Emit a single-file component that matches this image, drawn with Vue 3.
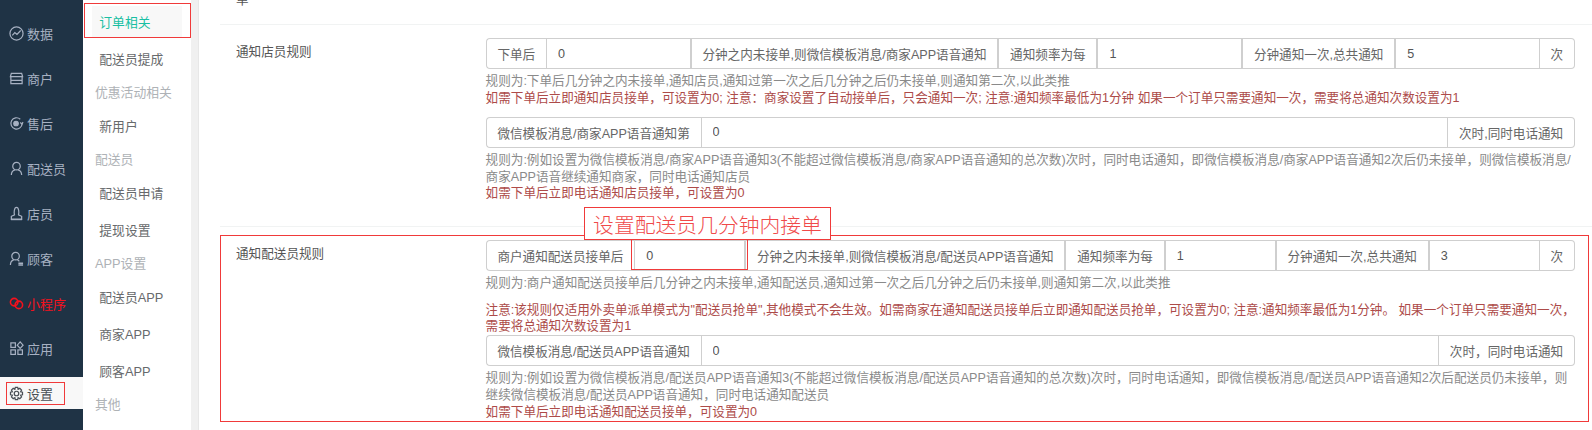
<script setup>
const navItems = [
  { key: 'data', label: '数据' },
  { key: 'store', label: '商户' },
  { key: 'after', label: '售后' },
  { key: 'rider', label: '配送员' },
  { key: 'clerk', label: '店员' },
  { key: 'customer', label: '顾客' },
  { key: 'mini', label: '小程序', hot: true },
  { key: 'apps', label: '应用' },
  { key: 'gear', label: '设置', active: true }
]
const subItems = [
  { label: '订单相关', active: true },
  { label: '配送员提成' },
  { label: '优惠活动相关', head: true },
  { label: '新用户' },
  { label: '配送员', head: true },
  { label: '配送员申请' },
  { label: '提现设置' },
  { label: 'APP设置', head: true },
  { label: '配送员APP' },
  { label: '商家APP' },
  { label: '顾客APP' },
  { label: '其他', head: true }
]
</script>

<template>
  <div class="page">
    <nav class="nav">
      <a v-for="n in navItems" :key="n.key" class="nav-item" :class="{ hot: n.hot, active: n.active }">
        <svg class="ico" viewBox="0 0 16 16" fill="none" stroke="currentColor" stroke-width="1.3">
          <template v-if="n.key === 'data'">
            <circle cx="8" cy="8" r="7" />
            <path d="M3.5 10 6.200 7l2.300 2L12.500 4.800" />
          </template>
          <template v-else-if="n.key === 'store'">
            <path d="M2.500 2.500h11l1 3.500h-13z" />
            <path d="M2 6.500v7h12v-7M2 10h12" />
          </template>
          <template v-else-if="n.key === 'after'">
            <path d="M14 8a6 6 0 1 1-2-4.600" />
            <path d="M15 6.500l-1.200 2-1.800-1.500" />
            <circle cx="7.500" cy="8" r="2.400" fill="currentColor" />
          </template>
          <template v-else-if="n.key === 'rider'">
            <circle cx="8" cy="5.500" r="4" />
            <path d="M2.500 15c0-3 2-5 4-5.500M13.500 15c0-3-2-5-4-5.500" />
          </template>
          <template v-else-if="n.key === 'clerk'">
            <path d="M6 9.500C5 7 5.500 1.500 8 1.500s3 5.500 2 8" />
            <path d="M6 9.500 2.500 11v3h11v-3L10 9.500" />
            <path d="M2 14.500h12" />
          </template>
          <template v-else-if="n.key === 'customer'">
            <circle cx="7" cy="5.500" r="4" />
            <path d="M1.500 15c0-3 2-5 3.500-5.500M9 9.500c.8.300 1.500.8 2 1.500" />
            <path d="M10 13h5M10 15h5" stroke-width="1.500" />
          </template>
          <template v-else-if="n.key === 'mini'">
            <circle cx="5.500" cy="6.500" r="4" stroke-width="1.700" />
            <circle cx="10.500" cy="9.500" r="4" stroke-width="1.700" />
          </template>
          <template v-else-if="n.key === 'apps'">
            <rect x="2" y="2" width="4.800" height="4.800" />
            <rect x="2" y="9.500" width="4.800" height="4.800" />
            <rect x="9.500" y="9.500" width="4.800" height="4.800" />
            <path d="M11.900 1 15 4.400 11.900 7.800 8.800 4.400z" />
          </template>
          <template v-else>
            <circle cx="8" cy="8" r="2.400" />
            <path d="M6.700 1.500h2.600l.4 2 1.800-1 1.900 1.900-1 1.800 2 .4v2.800l-2 .4 1 1.800-1.900 1.900-1.800-1-.4 2H6.700l-.4-2-1.800 1-1.900-1.900 1-1.800-2-.4V6.600l2-.4-1-1.800 1.900-1.900 1.800 1z" />
          </template>
        </svg>
        <span>{{ n.label }}</span>
      </a>
    </nav>

    <aside class="sub">
      <template v-for="s in subItems" :key="s.label">
        <div v-if="s.head" class="sub-head">{{ s.label }}</div>
        <a v-else class="sub-item" :class="{ active: s.active }">{{ s.label }}</a>
      </template>
    </aside>
    <div class="strip"></div>

    <main class="main">
      <div class="cut"><p>单</p></div>

      <section class="row first">
        <label class="row-label">通知店员规则</label>
        <div class="row-body">
          <div class="group">
            <span class="addon">下单后</span>
            <input value="0" />
            <span class="addon">分钟之内未接单,则微信模板消息/商家APP语音通知</span>
            <span class="addon">通知频率为每</span>
            <input value="1" />
            <span class="addon">分钟通知一次,总共通知</span>
            <input value="5" />
            <span class="addon">次</span>
          </div>
          <p class="help">规则为:下单后几分钟之内未接单,通知店员,通知过第一次之后几分钟之后仍未接单,则通知第二次,以此类推</p>
          <p class="help red">如需下单后立即通知店员接单，可设置为0; 注意：商家设置了自动接单后，只会通知一次; 注意:通知频率最低为1分钟 如果一个订单只需要通知一次，需要将总通知次数设置为1</p>
          <div class="group second">
            <span class="addon">微信模板消息/商家APP语音通知第</span>
            <input value="0" />
            <span class="addon">次时,同时电话通知</span>
          </div>
          <p class="help">规则为:例如设置为微信模板消息/商家APP语音通知3(不能超过微信模板消息/商家APP语音通知的总次数)次时，同时电话通知，即微信模板消息/商家APP语音通知2次后仍未接单，则微信模板消息/<br />商家APP语音继续通知商家，同时电话通知店员</p>
          <p class="help red">如需下单后立即电话通知店员接单，可设置为0</p>
        </div>
      </section>

      <section class="row">
        <label class="row-label">通知配送员规则</label>
        <div class="row-body">
          <div class="group">
            <span class="addon">商户通知配送员接单后</span>
            <input value="0" />
            <span class="addon">分钟之内未接单,则微信模板消息/配送员APP语音通知</span>
            <span class="addon">通知频率为每</span>
            <input value="1" />
            <span class="addon">分钟通知一次,总共通知</span>
            <input value="3" />
            <span class="addon">次</span>
          </div>
          <p class="help">规则为:商户通知配送员接单后几分钟之内未接单,通知配送员,通知过第一次之后几分钟之后仍未接单,则通知第二次,以此类推</p>
          <p class="help red spaced">注意:该规则仅适用外卖单派单模式为"配送员抢单",其他模式不会生效。如需商家在通知配送员接单后立即通知配送员抢单，可设置为0; 注意:通知频率最低为1分钟。 如果一个订单只需要通知一次，<br />需要将总通知次数设置为1</p>
          <div class="group tight">
            <span class="addon">微信模板消息/配送员APP语音通知</span>
            <input value="0" />
            <span class="addon">次时，同时电话通知</span>
          </div>
          <p class="help">规则为:例如设置为微信模板消息/配送员APP语音通知3(不能超过微信模板消息/配送员APP语音通知的总次数)次时，同时电话通知，即微信模板消息/配送员APP语音通知2次后配送员仍未接单，则<br />继续微信模板消息/配送员APP语音通知，同时电话通知配送员</p>
          <p class="help red">如需下单后立即电话通知配送员接单，可设置为0</p>
        </div>
      </section>

      <div class="mark rule-box"></div>
      <div class="mark input-box"></div>
      <div class="mark callout">设置配送员几分钟内接单</div>
    </main>
  </div>
</template>

<style>
html, body { margin: 0; overflow: hidden; background: #fff; }
</style>

<style scoped>
.page {
  display: flex;
  width: 1592px;
  height: 430px;
  overflow: hidden;
  font-family: "Liberation Sans", "Noto Sans CJK SC", sans-serif;
  font-size: 12.6px;
  color: #676a6c;
  background: #fff;
}
p { margin: 0; }

.nav {
  flex: 0 0 83px;
  display: flex;
  flex-direction: column;
  gap: 13px;
  padding-top: 17px;
  box-sizing: border-box;
  background: #1f3345;
  color: #a7b1c2;
}
.nav-item {
  position: relative;
  display: flex;
  align-items: center;
  gap: 3px;
  flex: 0 0 32px;
  padding-left: 9px;
  font-size: 13px;
}
.ico { width: 15px; height: 15px; flex: none; }
.nav-item.hot { color: #f5111d; }
.nav-item.active { background: #f8f8f8; color: #4a4f55; }
.nav-item.active::after {
  content: "";
  position: absolute;
  left: 6px;
  top: 5px;
  width: 57px;
  height: 21px;
  border: 1px solid #f03a3a;
}

.sub {
  flex: 0 0 108px;
  display: flex;
  flex-direction: column;
  padding-top: 3px;
  box-sizing: border-box;
  background: #fff;
}
.sub-item {
  position: relative;
  display: flex;
  align-items: center;
  flex: 0 0 31px;
  margin: 2.900px 9px;
  padding-left: 7.300px;
  color: #676a6c;
  font-size: 12.800px;
}
.sub-item.active { background: #f8f8f8; color: #19bfa3; }
.sub-item.active::after {
  content: "";
  position: absolute;
  left: -8px;
  top: -3px;
  width: 105px;
  height: 33px;
  border: 1px solid #f03a3a;
}
.sub-head {
  display: flex;
  align-items: center;
  flex: 0 0 30.400px;
  padding-left: 12px;
  color: #aeb2b6;
  font-size: 12.800px;
}
.strip {
  flex: 0 0 7px;
  background: #f0f0f0;
  border-right: 1px solid #e7e7e7;
}

.main { position: relative; flex: 1; min-width: 0; }
.cut {
  height: 24px;
  margin-left: 21px;
  padding-left: 16px;
  overflow: hidden;
  border-bottom: 1px solid #f1f3f3;
  color: #555;
}
.cut p { margin-top: -8px; line-height: 17px; }

.row {
  display: flex;
  margin-left: 21px;
  padding: 13px 17px 0 16px;
  height: 188px;
  box-sizing: border-box;
}
.row.first {
  height: 202px;
  border-bottom: 1px solid #f1f3f3;
}
.row-label { flex: 0 0 249.600px; padding-top: 6px; line-height: 17px; color: #555; }
.row-body { flex: 1; min-width: 0; }

.group { display: flex; height: 31px; }
.group.second { margin-top: 10.500px; }
.group.tight { margin-top: 0.500px; }
.addon {
  display: flex;
  align-items: center;
  flex: none;
  padding: 0 10.800px;
  border: 1px solid #cfcfcf;
  box-sizing: border-box;
  white-space: nowrap;
  color: #666;
}
.addon:first-child { border-right: 0; border-radius: 4px 0 0 4px; }
.addon:last-child { border-left: 0; border-radius: 0 4px 4px 0; }
input {
  flex: 1 1 0;
  min-width: 0;
  height: 100%;
  margin: 0;
  padding: 0 11px;
  box-sizing: border-box;
  border: 1px solid #cfcfcf;
  border-radius: 0;
  outline: 0;
  font: inherit;
  color: #555;
  background: #fff;
}
.help {
  margin-top: 0;
  line-height: 16.700px;
  color: #8a8a8a;
  white-space: nowrap;
}
.group + .help { margin-top: 4px; }
.help.red { color: #ad4b49; }
.help.red.spaced { margin-top: 10px; line-height: 16.500px; }

.mark { position: absolute; box-sizing: border-box; border: 1px solid #f03a3a; }
.rule-box { left: 21px; top: 235px; width: 1369px; height: 187px; }
.input-box { left: 432px; top: 239px; width: 117px; height: 31px; }
.callout {
  left: 385px;
  top: 207px;
  width: 247px;
  height: 33px;
  display: flex;
  align-items: center;
  justify-content: center;
  background: #fff;
  color: #f04a4a;
  font-size: 20.800px;
  font-weight: 300;
  font-family: "Noto Sans CJK SC", sans-serif;
  white-space: nowrap;
}
</style>
